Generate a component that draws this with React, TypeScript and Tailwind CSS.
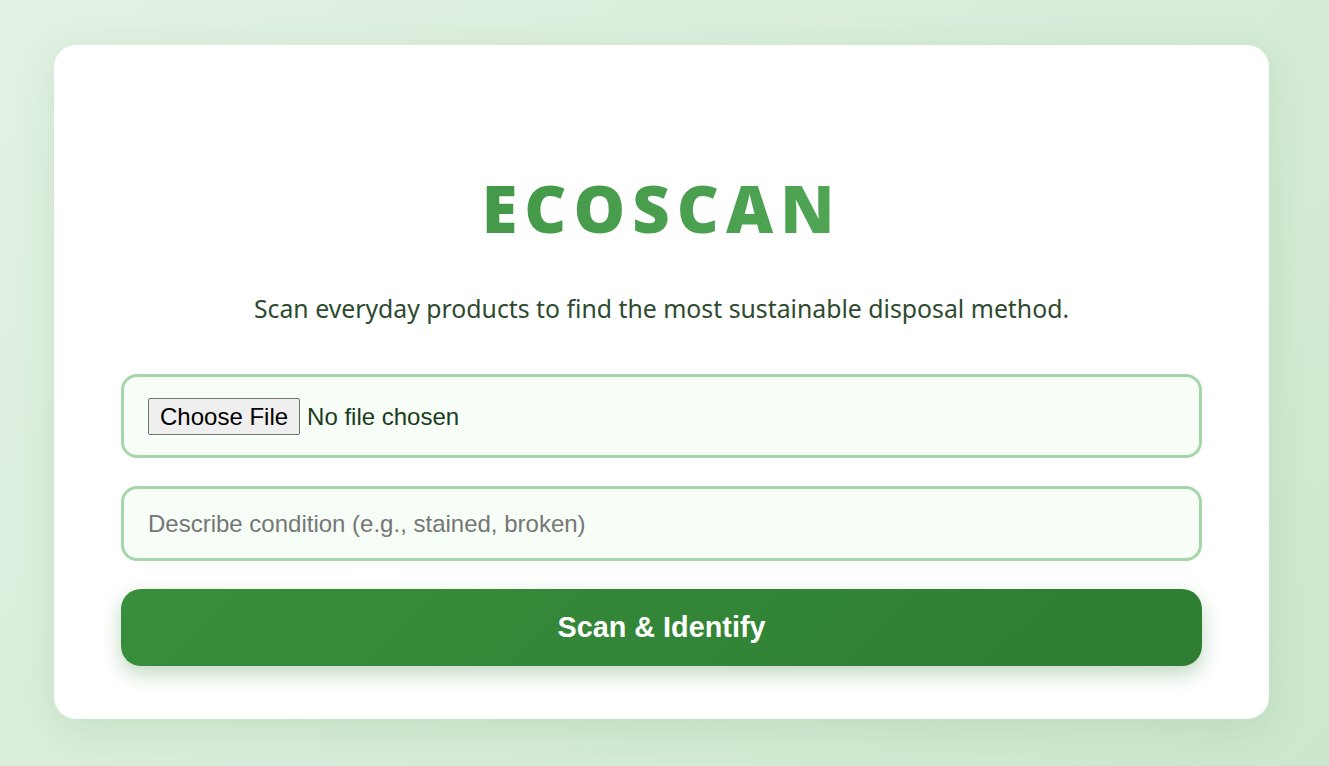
import React from "react";

export default function App() {
  return (
    <div className="min-h-[766px] w-full bg-[linear-gradient(135deg,#e3f2e4_0%,#cce7cd_100%)] pt-[45px] pb-[46px] font-['Liberation_Sans',Arial,sans-serif]">
      <div className="ml-[54px] flex w-[1215px] flex-col rounded-[22px] bg-white px-[67px] pt-[123px] pb-[53px] shadow-[0_10px_40px_rgba(46,125,50,0.12)]">
        <h1 className="bg-[linear-gradient(90deg,#388e3c,#5cb060)] bg-clip-text text-center font-['Open_Sans','Noto_Sans',sans-serif] text-[65px] font-extrabold leading-[80px] tracking-[7px] text-transparent">
          ECOSCAN
        </h1>
        <p className="mt-[44px] text-center font-['Noto_Sans','Open_Sans',sans-serif] text-[24.8px] leading-[32px] text-[#2e4a30]">
          Scan everyday products to find the most sustainable disposal method.
        </p>
        <div className="mt-[50px] flex h-[84px] items-center rounded-[16px] border-[3px] border-[#a5d6a7] bg-[#f7fdf7] px-[24px]">
          <input
            type="file"
            className="text-[24px] text-[#1b3d1d] file:mr-[7px] file:rounded-[2px] file:border file:border-solid file:border-[#767676] file:bg-[#efefef] file:px-[11px] file:py-[4px] file:text-[24px] file:leading-[27px] file:text-black"
          />
        </div>
        <input
          type="text"
          placeholder="Describe condition (e.g., stained, broken)"
          className="mt-[28px] h-[75px] rounded-[16px] border-[3px] border-[#a5d6a7] bg-[#f7fdf7] px-[24px] text-[24px] text-[#1b3d1d] outline-none placeholder:text-[#767676]"
        />
        <button className="mt-[28px] h-[77px] rounded-[20px] bg-[linear-gradient(135deg,#388e3c,#2e7d32)] text-[28.8px] font-bold text-white shadow-[0_8px_20px_rgba(46,125,50,0.3)]">
          Scan &amp; Identify
        </button>
      </div>
    </div>
  );
}
